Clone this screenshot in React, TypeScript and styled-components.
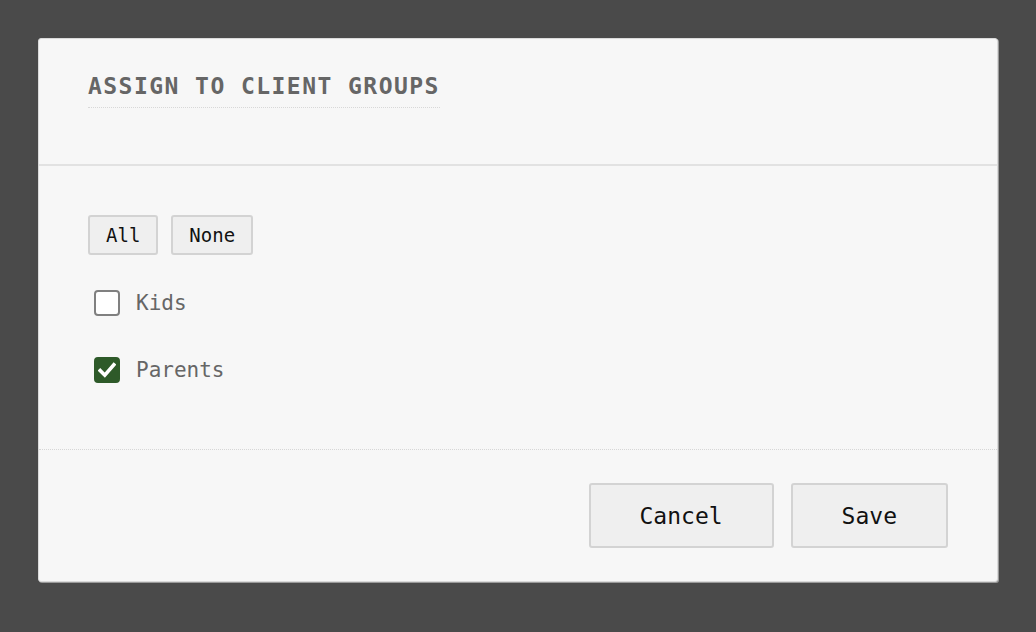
import React, { useState } from "react";
import styled, { createGlobalStyle } from "styled-components";

const GlobalStyle = createGlobalStyle`
  html, body {
    margin: 0;
    padding: 0;
    background: #4a4a4a;
  }
  * { box-sizing: border-box; }
`;

const Page = styled.div`
  min-height: 100vh;
  padding: 38px;
  font-family: "DejaVu Sans Mono", "Liberation Mono", monospace;
`;

const Modal = styled.div`
  width: 960px;
  background: #f7f7f7;
  border: 1px solid #dadada;
  border-radius: 3px;
  box-shadow: 1px 1px 0 #9a9a9a;
`;

const Header = styled.div`
  height: 127px;
  padding: 33px 49px 0;
  border-bottom: 2px solid #e2e2e2;
`;

const Title = styled.h2`
  display: inline-block;
  margin: 0;
  padding-bottom: 7px;
  font-size: 23px;
  line-height: 28px;
  font-weight: bold;
  letter-spacing: 1.45px;
  color: #666;
  border-bottom: 1px dotted #d8d8d8;
`;

const Body = styled.div`
  padding: 49px 49px 66px;
  border-bottom: 1px dotted #d6d6d6;
`;

const Toolbar = styled.div`
  display: flex;
  gap: 13px;
`;

const Button = styled.button<{ $size?: "small" | "large" }>`
  font-family: inherit;
  font-size: ${(p) => (p.$size === "large" ? "23px" : "19px")};
  height: ${(p) => (p.$size === "large" ? "65px" : "40px")};
  padding: ${(p) => (p.$size === "large" ? "0 49px" : "0 16px")};
  color: #111;
  background: #efefef;
  border: 2px solid #d3d3d3;
  border-radius: 3px;
  cursor: pointer;
`;

const CheckList = styled.div`
  display: flex;
  flex-direction: column;
  gap: 41px;
  margin-top: 35px;
  padding-left: 6px;
`;

const CheckRow = styled.label`
  display: flex;
  align-items: center;
  gap: 16px;
  cursor: pointer;
`;

const HiddenInput = styled.input`
  position: absolute;
  opacity: 0;
  width: 0;
  height: 0;
`;

const Box = styled.span<{ $checked: boolean }>`
  display: flex;
  align-items: center;
  justify-content: center;
  width: 26px;
  height: 26px;
  border-radius: 4px;
  border: 2px solid ${(p) => (p.$checked ? "#2e5a29" : "#808080")};
  background: ${(p) => (p.$checked ? "#2e5a29" : "#ffffff")};
`;

const CheckLabel = styled.span`
  font-size: 21px;
  line-height: 26px;
  color: #666;
`;

const Footer = styled.div`
  display: flex;
  justify-content: flex-end;
  gap: 17px;
  padding: 33px 49px 33px;
`;

const CheckMark = () => (
  <svg width="18" height="16" viewBox="0 0 18 16">
    <path
      d="M2.2 8.6 L6.8 13.2 L15.8 2.8"
      fill="none"
      stroke="#fff"
      strokeWidth="3.6"
      strokeLinecap="square"
      strokeLinejoin="miter"
    />
  </svg>
);

const groups = ["Kids", "Parents"];

export default function App() {
  const [selected, setSelected] = useState<Record<string, boolean>>({
    Kids: false,
    Parents: true,
  });

  const setAll = (v: boolean) =>
    setSelected(Object.fromEntries(groups.map((g) => [g, v])));

  return (
    <>
      <GlobalStyle />
      <Page>
        <Modal>
          <Header>
            <Title>ASSIGN TO CLIENT GROUPS</Title>
          </Header>
          <Body>
            <Toolbar>
              <Button $size="small" onClick={() => setAll(true)}>
                All
              </Button>
              <Button $size="small" onClick={() => setAll(false)}>
                None
              </Button>
            </Toolbar>
            <CheckList>
              {groups.map((g) => (
                <CheckRow key={g}>
                  <HiddenInput
                    type="checkbox"
                    checked={!!selected[g]}
                    onChange={(e) =>
                      setSelected((s) => ({ ...s, [g]: e.target.checked }))
                    }
                  />
                  <Box $checked={!!selected[g]}>
                    {selected[g] && <CheckMark />}
                  </Box>
                  <CheckLabel>{g}</CheckLabel>
                </CheckRow>
              ))}
            </CheckList>
          </Body>
          <Footer>
            <Button $size="large">Cancel</Button>
            <Button $size="large">Save</Button>
          </Footer>
        </Modal>
      </Page>
    </>
  );
}
